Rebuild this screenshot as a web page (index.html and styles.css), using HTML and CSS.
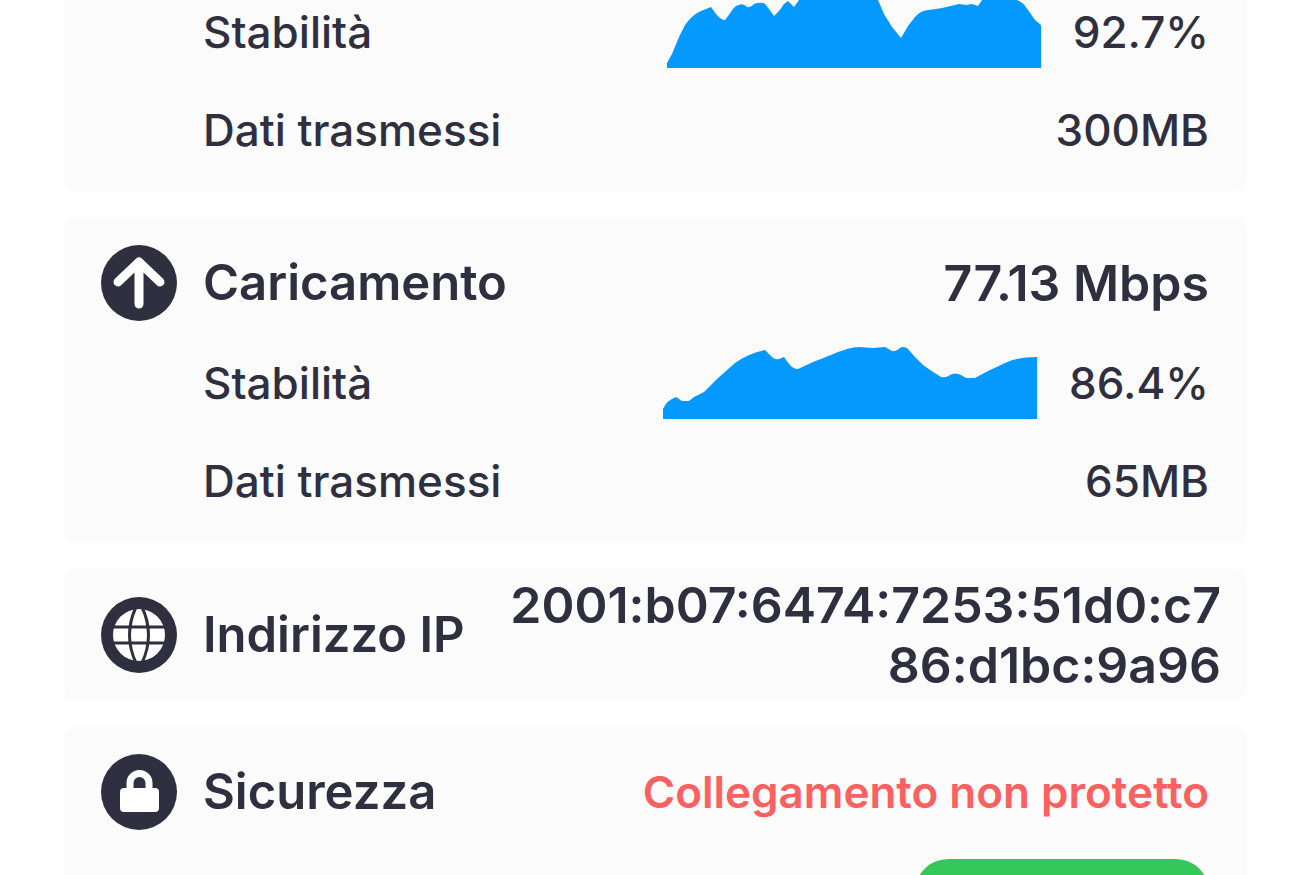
FILE: index.html
```html
<!DOCTYPE html>
<html lang="it">
<head>
    <meta charset="UTF-8">
    <meta name="viewport" content="width=device-width, initial-scale=1">
    <title>Risultati del test</title>
    <link rel="stylesheet" href="styles.css">
</head>
<body>

    <main class="results">
        <section class="card card-scrolled">
            <div class="row">
                <span class="label">Stabilità</span>
                <svg class="chart" viewBox="0 0 374 72" aria-hidden="true">
                    <path d="M0 72V67L5 58L12 41L18 29Q26 18 34 15L44 11L49 18Q54 24 58 24L64 16Q68 9 72 9Q76 7 80 11Q84 12 87 8Q92 6 97 7L102 13L107 20L112 15L117 8L121 5L127 11L132 4H155L170 0H205L211 4L217 18L225 31L234 42L241 30L248 21Q254 14 262 14L275 12L292 8L299 9L305 8L311 10L315 4H350Q356 6 361 14L368 24L374 29V72Z"/>
                </svg>
                <span class="value">92.7%</span>
            </div>
            <div class="row">
                <span class="label">Dati trasmessi</span>
                <span class="value">300MB</span>
            </div>
        </section>

        <section class="card">
            <div class="row row-title">
                <svg class="icon" viewBox="0 0 76 76" aria-hidden="true">
                    <circle class="disc" cx="38" cy="38" r="38"/>
                    <path class="arrow" d="M38 59V18M17 37L38 17L59 37"/>
                </svg>
                <h2 class="title">Caricamento</h2>
                <span class="result">77.13 Mbps</span>
            </div>
            <div class="row">
                <span class="label">Stabilità</span>
                <svg class="chart" viewBox="0 0 374 72" aria-hidden="true">
                    <path d="M0 72V62Q4 53 13 50L19 54H26L31 50L41 45L54 32L72 16Q86 6 102 3L109 10Q112 13 116 12L121 10L126 17Q130 22 135 22L150 15L168 8Q186 0 196 0L210 1L222 0L229 4Q233 5 237 1Q240-1 244 1L252 10L260 18L270 25L278 30Q283 31 287 28Q292 25 298 28L303 31H312L323 25L342 16Q354 10 374 10V72Z"/>
                </svg>
                <span class="value">86.4%</span>
            </div>
            <div class="row">
                <span class="label">Dati trasmessi</span>
                <span class="value">65MB</span>
            </div>
        </section>

        <section class="card card-ip">
            <svg class="icon" viewBox="0 0 76 76" aria-hidden="true">
                <circle class="disc" cx="38" cy="38" r="38"/>
                <circle class="globe" cx="38" cy="38" r="26"/>
                <path class="meridian" d="M11 30H65M11 46H65M35 10Q22 38 35 66M41 10Q54 38 41 66"/>
            </svg>
            <h2 class="title">Indirizzo IP</h2>
            <span class="result result-ip">2001:b07:6474:7253:51d0:c786:d1bc:9a96</span>
        </section>

        <section class="card">
            <div class="row row-title">
                <svg class="icon" viewBox="0 0 76 76" aria-hidden="true">
                    <circle class="disc" cx="38" cy="38" r="38"/>
                    <rect class="lock" x="19" y="34" width="39" height="24" rx="4"/>
                    <path class="shackle" d="M29 37V29A9 9 0 0 1 48 29V37"/>
                </svg>
                <h2 class="title">Sicurezza</h2>
                <span class="warning">Collegamento non protetto</span>
            </div>
            <div class="row">
                <span class="label">Rilevati problemi di rete</span>
                <button class="btn" type="button">Proteggi</button>
            </div>
        </section>
    </main>

</body>
</html>
```

FILE: styles.css
```css
body {
    margin: 0;
    height: 100vh;
    overflow: hidden;
    background-color: #fff;
    color: #2f2f3f;
    font-family: Inter, "Liberation Sans", sans-serif;
}

.results {
    display: flex;
    flex-direction: column;
    gap: 27px;
    padding: 0 63px 0 64px;
}

/* Cards */
.card {
    padding: 14px 38px 12px 37px;
    border-radius: 10px;
    background-color: #fbfbfb;
}

/* first card is partly scrolled off the top */
.card-scrolled {
    margin-top: -31px;
}

.row {
    display: flex;
    align-items: center;
    height: 98px;
    padding-left: 102px;
}

.row-title {
    height: 102px;
    padding-left: 0;
}

.card-ip {
    display: flex;
    align-items: center;
    padding: 6px 26px 5px 37px;
}

/* Text */
.title {
    margin: 0;
    font-size: 49px;
    font-weight: 600;
    line-height: 60px;
    white-space: nowrap;
}

.label,
.value {
    font-size: 44px;
    font-weight: 500;
    white-space: nowrap;
}

.label {
    margin-right: auto;
}

.result {
    margin-left: auto;
    font-size: 50px;
    font-weight: 600;
    line-height: 60px;
}

.result-ip {
    flex: 1;
    margin-left: 24px;
    text-align: right;
    word-break: break-all;
}

.warning {
    margin-left: auto;
    color: #fc6060;
    font-size: 44px;
    font-weight: 600;
}

/* Icons */
.icon {
    flex: none;
    width: 76px;
    height: 76px;
    margin-right: 26px;
}

.disc {
    fill: #2f2f3f;
}

.arrow {
    fill: none;
    stroke: #fff;
    stroke-width: 9;
    stroke-linecap: round;
    stroke-linejoin: round;
}

.globe,
.lock {
    fill: #fff;
}

.meridian {
    fill: none;
    stroke: #2f2f3f;
    stroke-width: 3;
}

.shackle {
    fill: none;
    stroke: #fff;
    stroke-width: 7;
}

/* Stability chart */
.chart {
    flex: none;
    width: 374px;
    height: 72px;
    margin-right: 32px;
    fill: #0399ff;
}

.btn {
    width: 294px;
    height: 66px;
    border: none;
    border-radius: 33px;
    background-color: #34c759;
    color: #fff;
    font-family: inherit;
    font-size: 44px;
    font-weight: 600;
    cursor: pointer;
}
```
